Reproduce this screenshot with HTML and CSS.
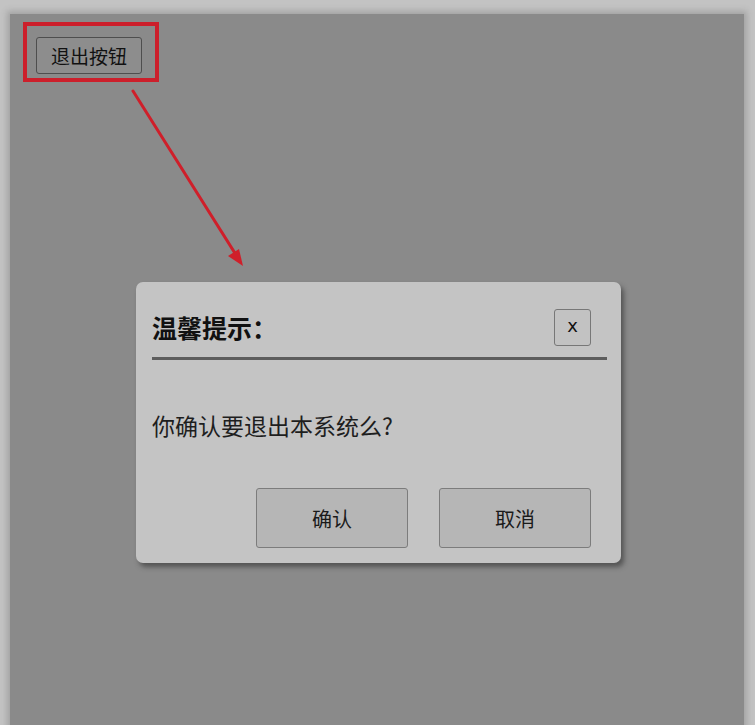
FILE: index.html
```html
<!DOCTYPE html>
<html lang="zh-CN">
<head>
<meta charset="utf-8">
<title>退出确认</title>
<link rel="stylesheet" href="styles.css">
</head>
<body>
<div class="screen">
  <div class="toolbar">
    <div class="highlight">
      <button class="exit-btn" type="button">退出按钮</button>
    </div>
  </div>

  <svg class="arrow" width="140" height="190" viewBox="0 0 140 190" aria-hidden="true">
    <line x1="5" y1="4" x2="110" y2="171" stroke="#cf1f2a" stroke-width="3" stroke-linecap="round"/>
    <polygon points="115,179 100,169 111,162" fill="#cf1f2a"/>
  </svg>

  <div class="dialog" role="dialog">
    <div class="dialog-header">
      <h2 class="dialog-title">温馨提示：</h2>
      <button class="close-btn" type="button">x</button>
    </div>
    <p class="dialog-msg">你确认要退出本系统么?</p>
    <div class="dialog-actions">
      <button class="action-btn" type="button">确认</button>
      <button class="action-btn" type="button">取消</button>
    </div>
  </div>
</div>
</body>
</html>
```

FILE: styles.css
```css
html, body {
  margin: 0;
  padding: 0;
}

body {
  background: #c3c3c3;
  width: 755px;
  height: 725px;
  overflow: hidden;
  font-family: "Noto Sans CJK SC", "Noto Sans", sans-serif;
}

.screen {
  position: relative;
  margin: 14px 0 0 10px;
  width: 734px;
  height: 730px;
  background: #8a8a8a;
  box-shadow: 0 0 6px 3px rgba(90, 90, 90, 0.3);
}

.toolbar {
  display: flex;
  padding: 8px 0 0 13px;
}

.highlight {
  border: 4px solid #cc1f2b;
  padding: 11px 13px 4px 9px;
  display: flex;
}

.exit-btn {
  font-family: inherit;
  font-size: 19px;
  line-height: 24px;
  color: #111;
  background: #8d8d8d;
  border: 1px solid #4e4e4e;
  border-radius: 3px;
  padding: 5px 10px 5px 10px;
  width: 106px;
  height: 37px;
}

.arrow {
  position: absolute;
  left: 118px;
  top: 73px;
  overflow: visible;
}

.dialog {
  position: absolute;
  left: 126px;
  top: 268px;
  width: 485px;
  height: 281px;
  box-sizing: border-box;
  background: #c4c4c4;
  border-radius: 7px;
  box-shadow: 3px 4px 5px rgba(40, 40, 40, 0.55);
  padding: 0 14px 0 16px;
  display: flex;
  flex-direction: column;
}

.dialog-header {
  display: flex;
  align-items: center;
  justify-content: space-between;
  padding-top: 27px;
  padding-bottom: 11px;
  border-bottom: 3px solid #5d5d5d;
}

.dialog-title {
  margin: 0;
  font-size: 25px;
  font-weight: bold;
  line-height: 37px;
  color: #111;
}

.close-btn {
  width: 37px;
  height: 37px;
  margin-right: 16px;
  font-family: "DejaVu Sans", sans-serif;
  font-size: 18px;
  line-height: 1;
  color: #111;
  background: #c2c2c2;
  border: 1px solid #777;
  border-radius: 3px;
  padding: 0 0 3px 0;
}

.dialog-msg {
  margin: 50px 0 0 0;
  font-size: 23px;
  line-height: 30px;
  color: #1e1e1e;
}

.dialog-actions {
  display: flex;
  justify-content: flex-end;
  gap: 31px;
  margin-top: 48px;
  padding-right: 16px;
}

.action-btn {
  width: 152px;
  height: 60px;
  font-family: inherit;
  font-size: 20px;
  color: #1a1a1a;
  background: #b6b6b6;
  border: 1px solid #7c7c7c;
  border-radius: 3px;
}
```
